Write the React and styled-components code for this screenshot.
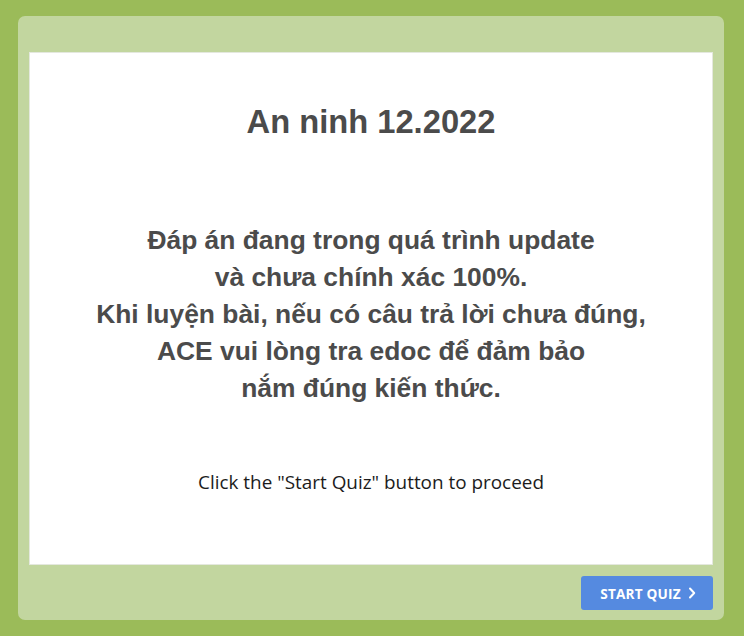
import React from "react";
import styled, { createGlobalStyle } from "styled-components";

const Global = createGlobalStyle`
  html, body { margin: 0; padding: 0; }
  body { background: #9bbb59; font-family: "Liberation Sans", Arial, sans-serif; }
`;

const Page = styled.div`
  width: 744px;
  height: 636px;
  box-sizing: border-box;
  padding: 16px 20px 16px 18px;
`;

const Panel = styled.div`
  height: 100%;
  box-sizing: border-box;
  background: #c2d69f;
  border-radius: 7px;
  padding: 36px 11px 10px 11px;
  display: flex;
  flex-direction: column;
`;

const Card = styled.div`
  height: 513px;
  box-sizing: border-box;
  background: #ffffff;
  border: 1px solid #e4e8de;
  display: flex;
  flex-direction: column;
  align-items: center;
  padding-top: 49px;
`;

const Title = styled.h1`
  margin: 0;
  font-family: "Liberation Sans", Arial, sans-serif;
  font-weight: bold;
  font-size: 32.7px;
  line-height: 40px;
  color: #4b4b4b;
  text-align: center;
`;

const Notice = styled.p`
  margin: 80px 0 0;
  font-family: "Liberation Sans", Arial, sans-serif;
  font-weight: bold;
  font-size: 26.4px;
  line-height: 37px;
  color: #4b4b4b;
  text-align: center;
  white-space: nowrap;
`;

const Hint = styled.p`
  margin: 62px 0 0;
  font-family: "Open Sans", sans-serif;
  font-size: 18.9px;
  line-height: 26px;
  color: #1c1c1c;
  text-align: center;
`;

const Footer = styled.div`
  display: flex;
  justify-content: flex-end;
  margin-top: 11px;
`;

const StartButton = styled.button`
  width: 132px;
  height: 34px;
  border: none;
  border-radius: 3px;
  background: #558ae0;
  color: #ffffff;
  font-family: "Open Sans", sans-serif;
  font-weight: bold;
  font-size: 13.6px;
  letter-spacing: 0.2px;
  display: flex;
  align-items: center;
  justify-content: center;
  gap: 7px;
  padding: 0 0 0 2px;
  cursor: pointer;
`;

const Chevron = () => (
  <svg width="8" height="12" viewBox="0 0 8 12" fill="none">
    <path d="M2 1.5 L6.2 6 L2 10.5" stroke="#ffffff" strokeWidth="2" strokeLinecap="round" strokeLinejoin="round" />
  </svg>
);

export default function App() {
  return (
    <>
      <Global />
      <Page>
        <Panel>
          <Card>
            <Title>An ninh 12.2022</Title>
            <Notice>
              Đáp án đang trong quá trình update
              <br />
              và chưa chính xác 100%.
              <br />
              Khi luyện bài, nếu có câu trả lời chưa đúng,
              <br />
              ACE vui lòng tra edoc để đảm bảo
              <br />
              nắm đúng kiến thức.
            </Notice>
            <Hint>Click the "Start Quiz" button to proceed</Hint>
          </Card>
          <Footer>
            <StartButton>
              START QUIZ
              <Chevron />
            </StartButton>
          </Footer>
        </Panel>
      </Page>
    </>
  );
}
